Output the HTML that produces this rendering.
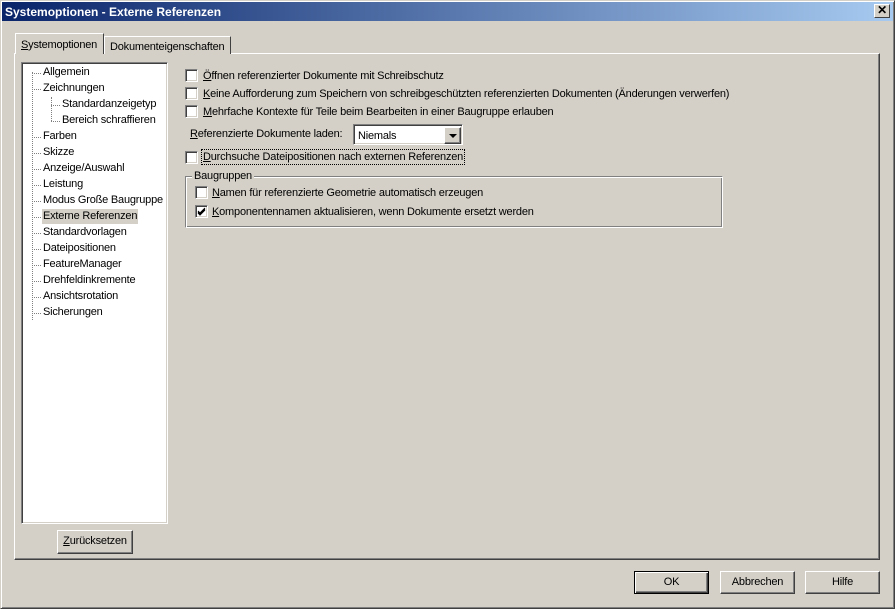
<!DOCTYPE html>
<html><head><meta charset="utf-8"><style>
*{box-sizing:border-box;margin:0;padding:0}
body{width:895px;height:609px;background:#d4d0c8;font-family:"Liberation Sans",sans-serif;font-size:11px;letter-spacing:-0.2px;color:#000;position:relative;overflow:hidden}
.a{position:absolute}
.win{left:0;top:0;width:895px;height:609px;border:1px solid;border-color:#d4d0c8 #404040 #404040 #d4d0c8;box-shadow:inset 1px 1px #fff,inset -1px -1px #808080}
.title{left:2px;top:2px;width:891px;height:19px;background:linear-gradient(90deg,#0a246a,#a6caf0);color:#fff;font-weight:bold;font-size:12px;letter-spacing:0;padding:3px 0 0 3px;white-space:nowrap}
.close{left:874px;top:4px;width:16px;height:14px;background:#d4d0c8;border:1px solid;border-color:#fff #404040 #404040 #fff;text-align:center;font-size:12px;line-height:11px;font-weight:bold;color:#000}
.raised{border:1px solid;border-color:#fff #404040 #404040 #fff;box-shadow:inset -1px -1px #808080}
.sunken{border:1px solid;border-color:#808080 #fff #fff #808080;box-shadow:inset 1px 1px #404040,inset -1px -1px #d4d0c8}
.panel{left:14px;top:53px;width:866px;height:507px}
.tab{border:1px solid;border-bottom:none;border-color:#fff #404040 #404040 #fff;background:#d4d0c8;padding:4px 0 0 5px;white-space:nowrap}
.tree{left:21px;top:62px;width:147px;height:462px;background:#fff}
.ti{position:absolute;white-space:nowrap;height:15px;line-height:15px;padding:0 1px}
.dh{position:absolute;border-top:1px dotted #808080;width:9px}
.cb{position:absolute;width:13px;height:13px;background:#fff;border:1px solid;border-color:#808080 #fff #fff #808080;box-shadow:inset 1px 1px #404040,inset -1px -1px #d4d0c8}
.lb{position:absolute;white-space:nowrap}
.btn{position:absolute;background:#d4d0c8;text-align:center;line-height:21px;border:1px solid;border-color:#fff #404040 #404040 #fff;box-shadow:inset -1px -1px #808080}
u{text-decoration:underline}
</style></head><body>
<div class="a win"></div>
<div class="a title">Systemoptionen - Externe Referenzen</div>
<div class="a close">✕</div>

<div class="a panel raised"></div>
<div class="a tab" style="left:104px;top:36px;width:127px;height:18px">Dokumenteigenschaften</div>
<div class="a tab" style="left:15px;top:33px;width:89px;height:21px;padding-top:5px;z-index:2"><u>S</u>ystemoptionen</div>
<div class="a" style="left:16px;top:53px;width:87px;height:2px;background:#d4d0c8;z-index:3"></div>

<div class="a tree sunken">
<div class="a" style="left:10px;top:9px;height:248px;border-left:1px dotted #808080"></div>
<div class="a" style="left:29px;top:34px;height:24px;border-left:1px dotted #808080"></div>
</div>
<div class="a" style="left:21px;top:64px">
<div class="dh" style="left:11px;top:9px"></div><div class="ti" style="left:21px;top:1px">Allgemein</div>
<div class="dh" style="left:11px;top:25px"></div><div class="ti" style="left:21px;top:17px">Zeichnungen</div>
<div class="dh" style="left:30px;top:41px"></div><div class="ti" style="left:40px;top:33px">Standardanzeigetyp</div>
<div class="dh" style="left:30px;top:57px"></div><div class="ti" style="left:40px;top:49px">Bereich schraffieren</div>
<div class="dh" style="left:11px;top:73px"></div><div class="ti" style="left:21px;top:65px">Farben</div>
<div class="dh" style="left:11px;top:89px"></div><div class="ti" style="left:21px;top:81px">Skizze</div>
<div class="dh" style="left:11px;top:105px"></div><div class="ti" style="left:21px;top:97px">Anzeige/Auswahl</div>
<div class="dh" style="left:11px;top:121px"></div><div class="ti" style="left:21px;top:113px">Leistung</div>
<div class="dh" style="left:11px;top:137px"></div><div class="ti" style="left:21px;top:129px">Modus Große Baugruppe</div>
<div class="dh" style="left:11px;top:153px"></div><div class="ti" style="left:21px;top:145px;background:#d4d0c8">Externe Referenzen</div>
<div class="dh" style="left:11px;top:169px"></div><div class="ti" style="left:21px;top:161px">Standardvorlagen</div>
<div class="dh" style="left:11px;top:185px"></div><div class="ti" style="left:21px;top:177px">Dateipositionen</div>
<div class="dh" style="left:11px;top:201px"></div><div class="ti" style="left:21px;top:193px">FeatureManager</div>
<div class="dh" style="left:11px;top:217px"></div><div class="ti" style="left:21px;top:209px">Drehfeldinkremente</div>
<div class="dh" style="left:11px;top:233px"></div><div class="ti" style="left:21px;top:225px">Ansichtsrotation</div>
<div class="dh" style="left:11px;top:249px"></div><div class="ti" style="left:21px;top:241px">Sicherungen</div>
</div>
<div class="btn" style="left:57px;top:530px;width:76px;height:24px"><u>Z</u>urücksetzen</div>

<div class="cb" style="left:185px;top:69px"></div><div class="lb" style="left:203px;top:70px"><u>Ö</u>ffnen referenzierter Dokumente mit Schreibschutz</div>
<div class="cb" style="left:185px;top:87px"></div><div class="lb" style="left:203px;top:88px"><u>K</u>eine Aufforderung zum Speichern von schreibgeschützten referenzierten Dokumenten (Änderungen verwerfen)</div>
<div class="cb" style="left:185px;top:105px"></div><div class="lb" style="left:203px;top:106px"><u>M</u>ehrfache Kontexte für Teile beim Bearbeiten in einer Baugruppe erlauben</div>
<div class="lb" style="left:190px;top:128px"><u>R</u>eferenzierte Dokumente laden:</div>
<div class="a sunken" style="left:353px;top:124px;width:110px;height:21px;background:#fff;padding:5px 0 0 4px">Niemals
<div class="a raised" style="left:90px;top:2px;width:17px;height:17px;background:#d4d0c8"><div class="a" style="left:4px;top:6px;width:0;height:0;border-left:4px solid transparent;border-right:4px solid transparent;border-top:4px solid #000"></div></div></div>
<div class="cb" style="left:185px;top:151px"></div><div class="lb" style="left:201px;top:149px;border:1px dotted #000;padding:1px 1px 0 1px;height:16px"><u>D</u>urchsuche Dateipositionen nach externen Referenzen</div>

<div class="a" style="left:185px;top:176px;width:538px;height:52px;border:1px solid;border-color:#808080 #fff #fff #808080;box-shadow:inset 1px 1px #fff,inset -1px -1px #808080"></div>
<div class="lb" style="left:192px;top:170px;background:#d4d0c8;padding:0 2px">Baugruppen</div>
<div class="cb" style="left:195px;top:186px"></div><div class="lb" style="left:212px;top:187px"><u>N</u>amen für referenzierte Geometrie automatisch erzeugen</div>
<div class="cb" style="left:195px;top:205px"><svg class="a" style="left:1px;top:1px" width="9" height="9"><path d="M1 4 L3 6 L8 1 M1 5 L3 7 L8 2 M1 6 L3 8 L8 3" stroke="#000" stroke-width="1" fill="none"/></svg></div><div class="lb" style="left:212px;top:206px"><u>K</u>omponentennamen aktualisieren, wenn Dokumente ersetzt werden</div>

<div class="btn" style="left:634px;top:571px;width:75px;height:23px;border:1px solid #000;box-shadow:inset 1px 1px #fff,inset -1px -1px #404040,inset -2px -2px #808080">OK</div>
<div class="btn" style="left:720px;top:571px;width:75px;height:23px">Abbrechen</div>
<div class="btn" style="left:805px;top:571px;width:75px;height:23px">Hilfe</div>
</body></html>
